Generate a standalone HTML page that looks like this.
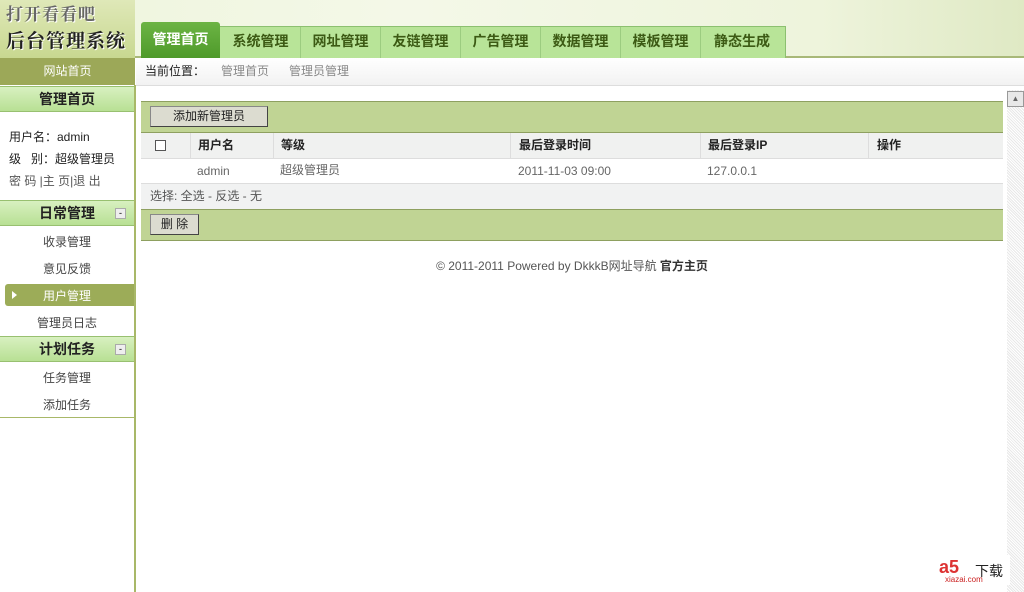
<!DOCTYPE html>
<html><head><meta charset="utf-8"><style>
*{margin:0;padding:0;box-sizing:border-box}
body{width:1024px;height:592px;overflow:hidden;background:#fff;font-family:"Liberation Sans","Noto Sans CJK SC",sans-serif;font-size:12px;color:#333;position:relative}
.a{position:absolute}
.hdr{left:0;top:0;width:1024px;height:58px;background:linear-gradient(90deg,#eef5dc,#f4f8e8 40%,#eef4dc 80%,#dfe9c4);border-bottom:2px solid #a8b878}
.logo{left:0;top:0;width:135px;height:58px;background:linear-gradient(#dfe8b8,#c8d890)}
.logo div{font-family:"Noto Serif CJK SC",serif;font-weight:bold;color:#222;text-shadow:1px 1px 0 #fff}
.tabs{left:141px;top:26px;width:645px;height:32px;background:#b8e498;border:1px solid #8cc070;border-bottom:none}
.tab{position:absolute;top:0;height:31px;line-height:29px;font-size:14px;font-weight:bold;color:#3c5a14;text-align:center;border-right:1px solid #9ccc80}
.tab0{left:141px;top:22px;width:79px;height:36px;background:linear-gradient(#6cb444,#4e9a2a);color:#fff;line-height:34px;font-size:14px;font-weight:bold;text-align:center;border-radius:3px 3px 0 0}
.nav1{left:0;top:58px;width:135px;height:27px;background:#9ca858;color:#fff;text-align:center;line-height:26px}
.crumb{left:136px;top:58px;width:888px;height:28px;background:linear-gradient(#fff,#f2f2f2);border-bottom:1px solid #ddd;line-height:26px}
.side{left:0;top:85px;width:136px;height:507px;border-right:2px solid #a8b868;background:#fff}
.sh{position:absolute;left:0;width:134px;height:26px;background:linear-gradient(#d8f0c0,#b8e094);border-top:1px solid #98c070;border-bottom:1px solid #98c070;text-align:center;font-weight:bold;font-size:14px;line-height:24px;color:#222}
.mn{position:absolute;right:8px;top:7px;width:11px;height:11px;background:#eee;border:1px solid #aaa;font-size:9px;line-height:8px;color:#555}
.si{position:absolute;left:0;width:134px;text-align:center;color:#444}
.tb{left:141px;width:862px;background:#c0d494;border-top:1px solid #8ea060;border-bottom:1px solid #8ea060}
.btn{position:absolute;background:#dcdcd0;border:1px solid #888;border-right-color:#444;border-bottom-color:#444;text-align:center;line-height:19px;color:#222}
.row{left:141px;width:862px}
.c{position:absolute;top:0;height:100%;line-height:24px}
</style></head><body>
<div class="a hdr"></div>
<div class="a logo"><div class="a" style="left:6px;top:0;font-size:17px;letter-spacing:1px;color:#666">打开看看吧</div><div class="a" style="left:6px;top:26px;font-size:19px;letter-spacing:1px">后台管理系统</div></div>
<div class="a tabs">
<div class="tab" style="left:79px;width:80px">系统管理</div>
<div class="tab" style="left:159px;width:80px">网址管理</div>
<div class="tab" style="left:239px;width:80px">友链管理</div>
<div class="tab" style="left:319px;width:80px">广告管理</div>
<div class="tab" style="left:399px;width:80px">数据管理</div>
<div class="tab" style="left:479px;width:80px">模板管理</div>
<div class="tab" style="left:559px;width:82px;border:none">静态生成</div>
</div>
<div class="a tab0">管理首页</div>
<div class="a nav1">网站首页</div>
<div class="a crumb"><span style="margin-left:9px;color:#222">当前位置：</span><span style="margin-left:16px;color:#888">管理首页</span><span style="margin-left:20px;color:#888">管理员管理</span></div>
<div class="a side">
<div class="sh" style="top:1px">管理首页</div>
<div class="a" style="left:9px;top:41px;line-height:22px;color:#222">用户名：admin<br>级&nbsp;&nbsp;&nbsp;别：超级管理员<br><span style="color:#555">密 码 |主 页|退 出</span></div>
<div class="sh" style="top:115px">日常管理<div class="mn">-</div></div>
<div class="si" style="top:148px">收录管理</div>
<div class="si" style="top:175px">意见反馈</div>
<div class="a" style="left:5px;top:199px;width:129px;height:22px;background:#9cac58;border-radius:3px 0 0 3px"></div>
<div class="a" style="left:12px;top:206px;width:0;height:0;border-left:5px solid #fff;border-top:4px solid transparent;border-bottom:4px solid transparent"></div>
<div class="si" style="top:202px;color:#fff">用户管理</div>
<div class="si" style="top:229px">管理员日志</div>
<div class="sh" style="top:251px">计划任务<div class="mn">-</div></div>
<div class="si" style="top:284px">任务管理</div>
<div class="si" style="top:311px">添加任务</div>
<div class="a" style="left:0;top:332px;width:134px;border-top:1px solid #a8b868"></div>
</div>
<div class="a tb" style="top:101px;height:32px"><div class="btn" style="left:9px;top:4px;width:118px">添加新管理员</div></div>
<div class="a row" style="top:133px;height:26px;background:#f0f1f0;border-bottom:1px solid #ddd;font-weight:bold;color:#222">
<div class="c" style="left:14px"><span style="display:inline-block;width:11px;height:11px;border:1px solid #555;background:#fff;vertical-align:middle"></span></div>
<div class="c" style="left:49px;border-left:1px solid #ddd;padding-left:7px;width:83px">用户名</div>
<div class="c" style="left:132px;border-left:1px solid #ddd;padding-left:7px">等级</div>
<div class="c" style="left:369px;border-left:1px solid #ddd;padding-left:8px">最后登录时间</div>
<div class="c" style="left:559px;border-left:1px solid #ddd;padding-left:7px">最后登录IP</div>
<div class="c" style="left:727px;border-left:1px solid #ddd;padding-left:8px">操作</div>
</div>
<div class="a row" style="top:159px;height:25px;background:#fff;border-bottom:1px solid #ddd;color:#666">
<div class="c" style="left:56px">admin</div>
<div class="c" style="left:139px;line-height:22px">超级管理员</div>
<div class="c" style="left:377px">2011-11-03 09:00</div>
<div class="c" style="left:566px">127.0.0.1</div>
</div>
<div class="a row" style="top:184px;height:25px;background:#f1f2f2;line-height:24px;padding-left:9px;color:#555">选择: 全选 - 反选 - 无</div>
<div class="a tb" style="top:209px;height:32px"><div class="btn" style="left:9px;top:4px;width:49px">删 除</div></div>
<div class="a" style="left:141px;top:257px;width:862px;text-align:center;color:#555;font-size:12px">© 2011-2011 Powered by DkkkB网址导航 <b style="color:#333">官方主页</b></div>
<div class="a" style="left:1007px;top:90px;width:17px;height:502px;background:repeating-linear-gradient(45deg,#e8e8e8 0 1px,#fff 1px 2px)"></div>
<div class="a" style="left:1007px;top:91px;width:17px;height:16px;background:#e8e8e8;border:1px solid #999;font-size:8px;text-align:center;line-height:14px;color:#666">▲</div>
<div class="a" style="left:935px;top:555px;width:75px;height:30px;background:#fff"><span class="a" style="left:4px;top:2px;color:#d33;font-weight:bold;font-size:18px">a5</span><span class="a" style="left:40px;top:6px;font-size:14px;color:#222">下载</span><span class="a" style="left:10px;top:20px;font-size:8px;color:#c22">xiazai.com</span></div>
</body></html>
